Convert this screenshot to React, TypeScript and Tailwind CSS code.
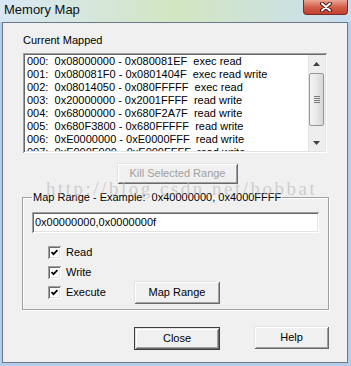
import React from "react";

const ROWS = [
  "000:  0x08000000 - 0x080081EF  exec read",
  "001:  0x080081F0 - 0x0801404F  exec read write",
  "002:  0x08014050 - 0x080FFFFF  exec read",
  "003:  0x20000000 - 0x2001FFFF  read write",
  "004:  0x68000000 - 0x680F2A7F  read write",
  "005:  0x680F3800 - 0x680FFFFF  read write",
  "006:  0xE0000000 - 0xE0000FFF  read write",
  "007:  0xE000F000 - 0xE000FFFF  read write",
];

// classic 3D edges
const raised =
  "shadow-[inset_1px_1px_0_#e3e3e3,inset_-1px_-1px_0_#696969,inset_2px_2px_0_#ffffff,inset_-2px_-2px_0_#a0a0a0]";
const sunken =
  "shadow-[inset_1px_1px_0_#a0a0a0,inset_-1px_-1px_0_#ffffff,inset_2px_2px_0_#696969,inset_-2px_-2px_0_#e3e3e3]";

function Check({ label }: { label: string }) {
  return (
    <div className="flex items-center">
      <span
        className={`flex h-[13px] w-[13px] items-center justify-center bg-white ${sunken}`}
      >
        <svg width="7" height="7" viewBox="0 0 7 7">
          <path d="M0.5 3 L2.5 5.2 L6.5 1" fill="none" stroke="#000" strokeWidth="1.8" />
        </svg>
      </span>
      <span className="ml-[5px] w-[68px]">{label}</span>
    </div>
  );
}

function Arrow({ up }: { up?: boolean }) {
  return (
    <div className="flex h-[17px] items-center justify-center">
      <svg width="7" height="4" viewBox="0 0 7 4">
        <path d={up ? "M0 4 L3.5 0 L7 4 Z" : "M0 0 L3.5 4 L7 0 Z"} fill="#404040" />
      </svg>
    </div>
  );
}

export default function App() {
  return (
    <div className="relative flex h-[366px] w-[351px] flex-col bg-[#b4cde8] font-['Liberation_Sans',Arial,sans-serif] text-[11px] text-black">
      {/* title bar */}
      <div className="flex h-[22px] items-start bg-linear-to-r from-[#d8e7f5] via-[#d3e6c2] to-[#c9def0]">
        <span className="pl-[4px] pt-[2px] text-[13px] leading-[16px] text-[#101010]">Memory Map</span>
        <div className="ml-auto mr-[3px] flex h-[15px] w-[45px] items-center justify-center rounded-b-[4px] border border-t-0 border-[#7a2d22] bg-linear-to-b from-[#e9a797] via-[#d25f4c] to-[#c0402c]">
          <svg width="12" height="10" viewBox="0 0 12 10">
            <path d="M2 1.5 L10 8.5 M10 1.5 L2 8.5" stroke="#4a1a14" strokeWidth="4" strokeLinecap="round" />
            <path d="M2 1.5 L10 8.5 M10 1.5 L2 8.5" stroke="#ffffff" strokeWidth="2" strokeLinecap="round" />
          </svg>
        </div>
      </div>

      {/* client area */}
      <div className="mb-[3px] ml-[2px] mr-[3px] flex flex-1 flex-col border border-[#6b7888] bg-[#f0f0f0]">
        <div className="ml-[20px] mt-[11px] leading-[13px]">Current Mapped</div>

        <div className={`ml-[20px] mt-[6px] flex h-[100px] w-[304px] bg-white p-[2px] ${sunken}`}>
          <div className="flex-1 overflow-hidden pl-[2px]">
            {ROWS.map((r) => (
              <div key={r} className="h-[13px] whitespace-pre leading-[13px]">
                {r}
              </div>
            ))}
          </div>
          <div className="flex w-[17px] flex-col bg-[#eeeeee] shadow-[inset_1px_0_0_#e4e4e4]">
            <Arrow up />
            <div className="flex-1 px-[1px] pt-[1px]">
              <div className="flex h-[53px] flex-col items-center justify-center gap-[1px] rounded-[2px] border border-[#979797] bg-linear-to-r from-[#f4f4f4] via-[#e8e8e8] to-[#d6d6d6]">
                <div className="h-[1px] w-[6px] bg-[#7c7c7c]" />
                <div className="h-[1px] w-[6px] bg-[#7c7c7c]" />
                <div className="h-[1px] w-[6px] bg-[#7c7c7c]" />
                <div className="h-[1px] w-[6px] bg-[#7c7c7c]" />
              </div>
            </div>
            <Arrow />
          </div>
        </div>

        <div
          className={`ml-[114px] mt-[10px] flex h-[21px] w-[121px] items-center justify-center text-[#a0a0a0] ${raised}`}
        >
          Kill Selected Range
        </div>

        <fieldset className="ml-[19px] mt-[7px] w-[307px] border border-[#a0a0a0] pb-[7px] shadow-[inset_1px_1px_0_#ffffff,1px_1px_0_#ffffff]">
          <legend className="ml-[9px] whitespace-pre px-[1px] leading-[13px]">
            Map Range - Example:  0x40000000, 0x4000FFFF
          </legend>
          <div
            className={`ml-[9px] mt-[8px] flex h-[21px] w-[287px] items-center bg-white pl-[3px] ${sunken}`}
          >
            0x00000000,0x0000000f
          </div>
          <div className="ml-[25px] mt-[9px] flex flex-col">
            <div className="flex h-[20px] items-center">
              <Check label="Read" />
            </div>
            <div className="flex h-[20px] items-center">
              <Check label="Write" />
            </div>
            <div className="flex h-[20px] items-center">
              <Check label="Execute" />
              <div
                className={`flex h-[23px] w-[86px] shrink-0 items-center justify-center ${raised}`}
              >
                Map Range
              </div>
            </div>
          </div>
        </fieldset>

        <div className="mt-[16px] flex items-start">
          <div
            className={`ml-[131px] mt-[1px] flex h-[23px] w-[86px] items-center justify-center border border-[#3c3c3c] ${raised}`}
          >
            Close
          </div>
          <div
            className={`ml-[34px] flex h-[23px] w-[75px] items-center justify-center ${raised}`}
          >
            Help
          </div>
        </div>
      </div>

      {/* blog watermark */}
      <div className="pointer-events-none absolute left-[46px] top-[179px] font-['Liberation_Serif',serif] text-[19px] leading-[20px] tracking-[2.5px] text-[#b8b8b8] opacity-60">
        http://blog.csdn.net/hobbat
      </div>
    </div>
  );
}
